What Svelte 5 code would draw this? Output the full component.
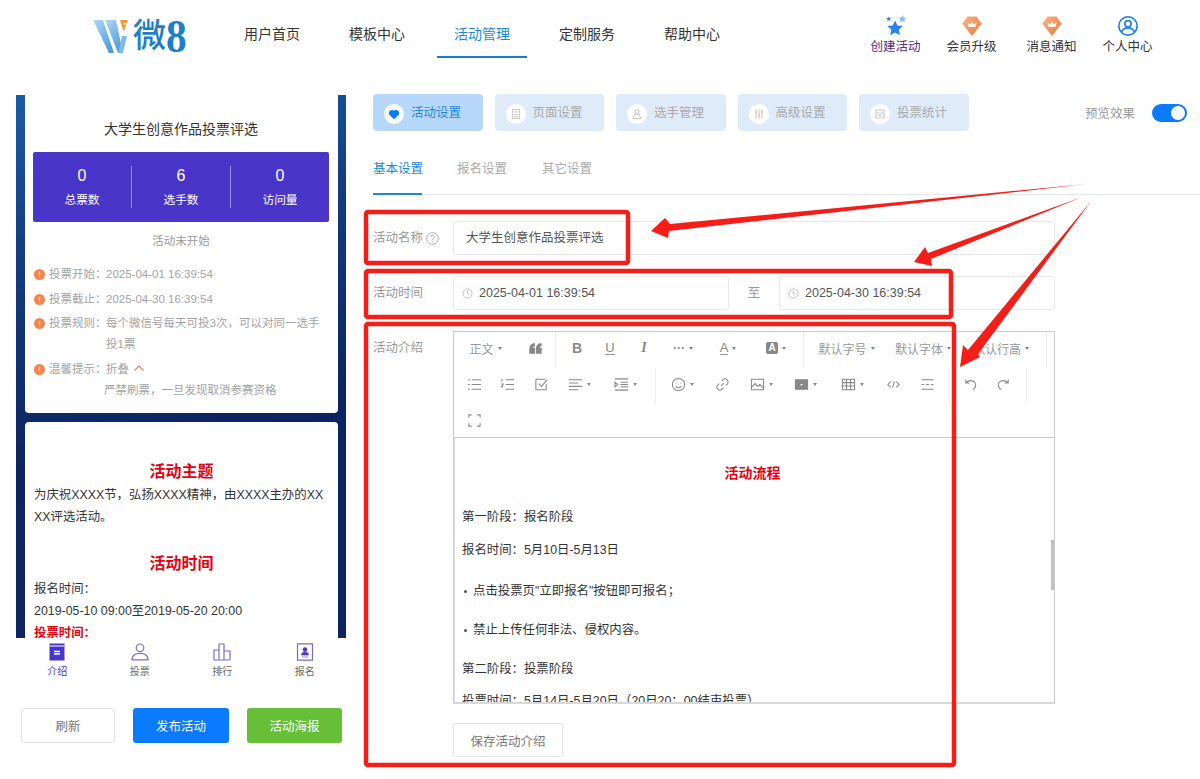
<script>
  const nav = [
    { label: '用户首页' },
    { label: '模板中心' },
    { label: '活动管理', active: true },
    { label: '定制服务' },
    { label: '帮助中心' }
  ];
  const info = [
    { k: '投票开始：', v: '2025-04-01 16:39:54' },
    { k: '投票截止：', v: '2025-04-30 16:39:54' },
    { k: '投票规则：', v: '每个微信号每天可投3次，可以对同一选手投1票' }
  ];
  const stats = [
    { n: 0, l: '总票数' },
    { n: 6, l: '选手数' },
    { n: 0, l: '访问量' }
  ];
  const tabs = [
    { label: '活动设置', active: true, d: 'M10 14.500 L6 10.600 A2.500 2.500 0 0 1 10 7.600 A2.500 2.500 0 0 1 14 10.600 Z' },
    { label: '页面设置', d: 'M6.5 5.5h7v9h-7z M8 8h4 M8 10.500h4 M8 12.500h4' },
    { label: '选手管理', d: 'M10 5.500a2 2 0 1 1 0 4a2 2 0 1 1 0-4z M6 14.500l2-4h4l2 4z' },
    { label: '高级设置', d: 'M7 5.500v9 M10 5.500v9 M13 5.500v9 M5.800 8h2.400 M8.800 11h2.400 M11.800 8h2.400' },
    { label: '投票统计', d: 'M6 6h8v8h-8z M6 9h8 M8 11.500h4' }
  ];
  const subtabs = ['基本设置', '报名设置', '其它设置'];
  const toolbar = [
    [
      { w: 63, text: '正文', caret: true },
      { w: 37, d: 'M2 13V8c0-3 2-5 5-5v2c-1.500 0-2 1-2 3h2v5z M9 13V8c0-3 2-5 5-5v2c-1.500 0-2 1-2 3h2v5z', cls: 'solid' },
      { w: 2, div: true },
      { w: 42, glyph: 'B', cls: 'bold' },
      { w: 24, glyph: 'U', cls: 'under' },
      { w: 44, glyph: 'I', cls: 'ital' },
      { w: 34, glyph: '···', cls: 'dots', caret: true },
      { w: 56, glyph: 'A', cls: 'under', caret: true },
      { w: 40, glyph: 'A', cls: 'boxed', caret: true },
      { w: 6 },
      { w: 1, div: true },
      { w: 85, text: '默认字号', caret: true },
      { w: 68, text: '默认字体', caret: true },
      { w: 88, text: '默认行高', caret: true },
      { w: 1, div: true }
    ],
    [
      { w: 40, d: 'M1 3h2 M5 3h10 M1 8h2 M5 8h10 M1 13h2 M5 13h10' },
      { w: 26, d: 'M2 2v3 M1.500 7.500h2l-2 3h2 M6 3h9 M6 8h9 M6 13h9' },
      { w: 42, d: 'M2 2.500h10 M2 2.500v11h11v-6 M5 7l3 3 6-7' },
      { w: 34, d: 'M1 3h14 M1 6.500h10 M1 10h14 M1 13.500h10', caret: true },
      { w: 58, d: 'M1 2h14 M7 5.500h8 M7 8h8 M7 10.500h8 M1 14h14 M1 5.500l3 2.500-3 2.500z', caret: true },
      { w: 1, div: true },
      { w: 52, d: 'M8 1.500a6.500 6.500 0 1 1 0 13a6.500 6.500 0 1 1 0-13z M5 10c1.500 1.800 4.500 1.800 6 0 M5.500 6v1 M10.500 6v1', caret: true },
      { w: 28, d: 'M6.500 9.500l3-3 M7 4.500l1.500-1.500a3 3 0 0 1 4.500 4.500l-1.500 1.500 M9 11.500l-1.500 1.500a3 3 0 0 1-4.500-4.500l1.500-1.500' },
      { w: 50, d: 'M1.500 2.500h13v11h-13z M1.500 11l4-4 3 3 2-2 4 4', caret: true },
      { w: 38, d: 'M1.500 3h13v10h-13z M6.500 5.500v5l4-2.500z', caret: true, cls: 'solid' },
      { w: 56, d: 'M1.500 2.500h13v11h-13z M1.500 6h13 M1.500 9.700h13 M5.800 2.500v11 M10.200 2.500v11', caret: true },
      { w: 26, d: 'M5 5l-3 3 3 3 M11 5l3 3-3 3 M9 4.500l-2 7' },
      { w: 42, d: 'M1.500 3h13 M1.500 8h3 M6.500 8h3 M11.500 8h3 M1.500 13h13' },
      { w: 1, div: true },
      { w: 40, d: 'M3 6.500c2-3 8-4 10 0c1.200 2.600-.5 5.500-2.500 7 M3 2.500v4h4' },
      { w: 26, d: 'M13 6.500c-2-3-8-4-10 0c-1.200 2.600.5 5.500 2.500 7 M13 2.500v4h-4' },
      { w: 9 },
      { w: 1, div: true }
    ],
    [{ w: 40, d: 'M2 5v-3h3 M11 2h3v3 M14 11v3h-3 M5 14h-3v-3' }]
  ];
  const bottomTabs = ['介绍', '投票', '排行', '报名'];
</script>

{#snippet reward()}
  <svg class="act-icon" viewBox="0 0 24 24" aria-hidden="true">
    <defs>
      <linearGradient id="rw" x1="0" y1="0" x2="1" y2="1">
        <stop offset="0" stop-color="#fbb184" />
        <stop offset="1" stop-color="#ee7c3d" />
      </linearGradient>
    </defs>
    <path d="M7 1.500h10l5.500 8L12 23 1.500 9.500z" fill="url(#rw)" />
    <path d="M8 13h8l1-5-3 2-2-3-2 3-3-2z" fill="#fff" opacity=".9" />
  </svg>
{/snippet}

{#snippet alert()}
  <svg class="alert" viewBox="0 0 10 10" aria-hidden="true">
    <circle cx="5" cy="5" r="5" fill="#f5854d" />
    <path d="M5 2.500v3.200 M5 7v.8" stroke="#fde6d8" stroke-width="1.100" />
  </svg>
{/snippet}

{#snippet clock()}
  <svg class="clock" viewBox="0 0 12 12" aria-hidden="true">
    <circle cx="6" cy="6" r="5" />
    <path d="M6 3v3.200l2 1" />
  </svg>
{/snippet}

<div class="page">
  <header class="top">
    <div class="logo">
      <svg class="logo-w" viewBox="0 0 36 35" aria-hidden="true">
        <defs>
          <linearGradient id="wg" x1="0" y1="0" x2="0.7" y2="1">
            <stop offset="0" stop-color="#b3d8f3" />
            <stop offset="1" stop-color="#4a9edd" />
          </linearGradient>
        </defs>
        <path d="M0 1h10l11 33h-5z" fill="url(#wg)" />
        <path d="M12 1h11l7 33h-5z" fill="url(#wg)" />
        <path d="M25 34h5l4-17h-5z" fill="#7fbbe8" />
        <path d="M27 1h8l-1 3h-3.500v1.500h3l-3 7z" fill="#f39a32" />
      </svg>
      <span class="logo-wei">微</span><span class="logo-8">8</span>
    </div>
    <nav class="nav">
      {#each nav as n}
        <a class="nav-item" class:active={n.active}>{n.label}</a>
      {/each}
    </nav>
    <div class="actions">
      <div class="act purple">
        <svg class="act-icon" viewBox="0 0 24 24" aria-hidden="true">
          <path d="M11 6l2.600 5.400 5.900.7-4.400 4 1.200 5.900-5.300-3-5.300 3 1.200-5.900-4.400-4 5.900-.7z" fill="#2b82ee" />
          <path d="M19 0l1.300 2.700 3 .3-2.200 2.100.6 3-2.700-1.500-2.700 1.500.6-3-2.200-2.100 3-.3z" fill="#8fbdf3" />
          <path d="M4 1.500l.8 1.700 1.800.2-1.300 1.300.3 1.800-1.600-.9-1.600.9.3-1.800-1.300-1.300 1.800-.2z" fill="#2b82ee" />
        </svg>
        <span>创建活动</span>
      </div>
      <div class="act">{@render reward()}<span>会员升级</span></div>
      <div class="act">{@render reward()}<span>消息通知</span></div>
      <div class="act">
        <svg class="act-icon" viewBox="0 0 24 24" fill="none" stroke="#1f82e4" stroke-width="1.800" aria-hidden="true">
          <circle cx="12" cy="12" r="10" />
          <circle cx="12" cy="9.500" r="3.400" />
          <path d="M5 18.500c1.500-3.500 4-4.500 7-4.500s5.500 1 7 4.500" />
        </svg>
        <span>个人中心</span>
      </div>
    </div>
  </header>

  <div class="main">
    <aside class="side">
      <div class="phone">
        <section class="card head-card">
          <h2 class="vote-title">大学生创意作品投票评选</h2>
          <div class="stats">
            {#each stats as s}
              <div class="stat">
                <div class="stat-n">{s.n}</div>
                <div class="stat-l">{s.l}</div>
              </div>
            {/each}
          </div>
          <div class="status">活动未开始</div>
          <div class="info">
            {#each info as i}
              <div class="info-row">
                {@render alert()}
                <span class="info-k">{i.k}</span>
                <span class="info-v">{i.v}</span>
              </div>
            {/each}
            <div class="info-row">
              {@render alert()}
              <span class="info-k">温馨提示：</span>
              <span class="info-v">折叠
                <svg class="chev" viewBox="0 0 10 6" aria-hidden="true"><path d="M.5 5.500L5 1l4.500 4.500" /></svg>
              </span>
            </div>
            <div class="info-last">严禁刷票，一旦发现取消参赛资格</div>
          </div>
        </section>
        <section class="card intro-card">
          <h3 class="intro-h">活动主题</h3>
          <p class="intro-p">为庆祝XXXX节，弘扬XXXX精神，由XXXX主办的XXXX评选活动。</p>
          <h3 class="intro-h second">活动时间</h3>
          <p class="intro-p">报名时间：</p>
          <p class="intro-p">2019-05-10 09:00至2019-05-20 20:00</p>
          <p class="intro-p red">投票时间：</p>
        </section>
      </div>
      <div class="bottom-tabs">
        {#each bottomTabs as t, i}
          <div class="bt" class:on={i === 0}>
            <svg viewBox="0 0 18 18" aria-hidden="true">
              {#if i === 0}
                <path d="M1.500 .5h15v17h-15z" fill="#4a35c9" />
                <path d="M1.500 3h15" stroke="#fff" stroke-width="1" />
                <path d="M6 8.500h6 M6 11h6" stroke="#fff" stroke-width="1.300" />
              {:else if i === 1}
                <circle cx="9" cy="4.800" r="3.800" fill="none" stroke="#7a6ad6" stroke-width="1.200" />
                <path d="M1 16.800c0-4 3-6.500 8-6.500s8 2.500 8 6.500z" fill="none" stroke="#7a6ad6" stroke-width="1.200" />
              {:else if i === 2}
                <path d="M1 17v-10h5v10 M6 17v-16h5v16 M11 17v-9h6v9 M1 17h16" fill="none" stroke="#7a6ad6" stroke-width="1.200" />
              {:else}
                <path d="M1.500 .8h15v16.400h-15z" fill="none" stroke="#7a6ad6" stroke-width="1.200" />
                <circle cx="9" cy="6.500" r="2.200" fill="#4a35c9" />
                <path d="M5.500 12c0-2 1.500-3 3.500-3s3.500 1 3.500 3z M6 14h6" fill="#4a35c9" stroke="#4a35c9" stroke-width=".6" />
              {/if}
            </svg>
            <span>{t}</span>
          </div>
        {/each}
      </div>
      <div class="side-btns">
        <button class="btn plain">刷新</button>
        <button class="btn blue">发布活动</button>
        <button class="btn green">活动海报</button>
      </div>
    </aside>

    <div class="content">
      <div class="tabs-row">
        {#each tabs as t}
          <div class="tab" class:active={t.active}>
            <span class="tab-dot">
              <svg viewBox="0 0 20 20" aria-hidden="true" class:heart={t.active}>
                <path d={t.d} />
              </svg>
            </span>
            <span class="tab-label">{t.label}</span>
          </div>
        {/each}
        <div class="preview">
          <span>预览效果</span>
          <span class="switch"><span class="knob"></span></span>
        </div>
      </div>

      <div class="subtabs">
        {#each subtabs as s, i}
          <span class="subtab" class:active={i === 0}>{s}</span>
        {/each}
      </div>

      <div class="form">
        <div class="row r1">
          <label class="lbl">活动名称
            <svg class="help" viewBox="0 0 14 14" aria-hidden="true">
              <circle cx="7" cy="7" r="6.300" />
              <path d="M5.200 5.500c0-2.400 3.800-2.400 3.800-.2 0 1.500-2 1.500-2 3.200 M7 10v1" />
            </svg>
          </label>
          <div class="input name">大学生创意作品投票评选</div>
        </div>
        <div class="row r2">
          <label class="lbl">活动时间</label>
          <div class="input date">{@render clock()}<span>2025-04-01 16:39:54</span></div>
          <span class="to">至</span>
          <div class="input date">{@render clock()}<span>2025-04-30 16:39:54</span></div>
        </div>
        <div class="row r3">
          <label class="lbl">活动介绍</label>
          <div class="editor-col">
            <div class="editor">
              <div class="toolbar">
                {#each toolbar as tr}
                  <div class="t-row">
                    {#each tr as it}
                      {#if it.div}
                        <span class="t-div"></span>
                      {:else}
                        <span class="tool" style:width="{it.w}px">
                          {#if it.text}
                            <span class="t-text">{it.text}</span>
                          {:else if it.glyph}
                            <span class="t-glyph {it.cls}">{it.glyph}</span>
                          {:else if it.d}
                            <svg class="t-ico {it.cls || ''}" viewBox="0 0 16 16" aria-hidden="true"><path d={it.d} /></svg>
                          {/if}
                          {#if it.caret}<i class="caret"></i>{/if}
                        </span>
                      {/if}
                    {/each}
                  </div>
                {/each}
              </div>
              <div class="doc">
                <div class="doc-title">活动流程</div>
                <p class="l1">第一阶段：报名阶段</p>
                <p class="l2">报名时间：5月10日-5月13日</p>
                <p class="l3 bullet">点击投票页"立即报名"按钮即可报名；</p>
                <p class="l4 bullet">禁止上传任何非法、侵权内容。</p>
                <p class="l4">第二阶段：投票阶段</p>
                <p class="l2b">投票时间：5月14日-5月20日（20日20：00结束投票）</p>
                <span class="thumb"></span>
              </div>
            </div>
            <button class="save">保存活动介绍</button>
          </div>
        </div>
      </div>
    </div>
  </div>

  <svg class="marks" viewBox="0 0 1200 779" aria-hidden="true">
    <rect x="366" y="212" width="262" height="51" rx="2" />
    <rect x="366" y="271" width="585" height="46" rx="2" />
    <rect x="366" y="324" width="588" height="441" rx="2" />
    <polygon class="arrow" points="1086,184 670,224 665,218 651,231 668,238 669,231" />
    <polygon class="arrow" points="1082,197 928,253 925,247 914,262 932,266 931,259" />
    <polygon class="arrow" points="1092,200 978,354 980,357 960,367 963,345 968,350" />
  </svg>
</div>

<style>
  :global(body) { margin: 0; background: #fff; }
  * { box-sizing: border-box; }
  .page {
    position: relative;
    width: 1200px;
    height: 779px;
    overflow: hidden;
    background: #fff;
    font-family: "Liberation Sans", "Noto Sans CJK SC", sans-serif;
    color: #333;
  }

  .top { display: flex; align-items: flex-start; height: 78px; padding-left: 93px; padding-right: 47px; }
  .logo { display: flex; align-items: center; width: 94px; height: 36px; margin-top: 18px; color: #1e7fc9; }
  .logo-w { width: 36px; height: 35px; flex: none; }
  .logo-wei { font-size: 33px; line-height: 36px; margin-left: 4px; flex: none; font-weight: 500; }
  .logo-8 { font-family: "Liberation Serif", serif; font-size: 47px; line-height: 36px; flex: none; width: 20px; transform: scaleX(.88); transform-origin: left center; font-weight: 700; }

  .nav { display: flex; gap: 15px; margin-left: 40px; }
  .nav-item { width: 90px; height: 58px; padding-top: 24px; line-height: 20px; font-size: 14px; text-align: center; color: #333; border-bottom: 2px solid transparent; }
  .nav-item.active { color: #1d87e0; border-bottom-color: #1a7ad4; }

  .actions { margin-left: auto; display: flex; gap: 25px; padding-top: 15px; }
  .act { display: flex; flex-direction: column; align-items: center; width: 51px; font-size: 12.500px; line-height: 16px; color: #333; }
  .act:nth-child(3) { margin-left: 4px; }
  .act.purple { color: #5b2a86; }
  .act-icon { width: 22px; height: 22px; margin-bottom: 2px; flex: none; }

  .main { display: flex; align-items: flex-start; }
  .side { width: 330px; margin-left: 16px; margin-top: 17px; flex: none; }
  .phone {
    height: 543px;
    padding: 0 8px 0 9px;
    overflow: hidden;
    background: linear-gradient(168deg, #1b5ca6 0%, #143d80 25%, #0c2560 60%, #0d2660 100%);
  }
  .card { background: #fff; border-radius: 4px; }
  .head-card { height: 318px; padding: 25px 9px 0 8px; border-radius: 0 0 4px 4px; }
  .vote-title { margin: 0; font-size: 14px; font-weight: 400; text-align: center; line-height: 18px; color: #333; }
  .stats { display: flex; align-items: center; height: 70px; margin-top: 14px; background: #4a35c9; border-radius: 2px; }
  .stat { flex: 1; height: 42px; color: #fff; text-align: center; border-right: 1px solid rgba(255, 255, 255, .45); }
  .stat:last-child { border-right: 0; }
  .stat-n { font-size: 16px; line-height: 20px; margin-top: 0; }
  .stat-l { font-size: 11.700px; line-height: 16px; margin-top: 6px; }
  .status { margin-top: 10px; text-align: center; font-size: 11.500px; line-height: 18px; color: #999; }
  .info { margin-top: 14px; font-size: 11.500px; color: #a3a3a3; line-height: 21px; padding-left: 1px; }
  .info-row { display: flex; align-items: flex-start; margin-bottom: 3.500px; }
  .alert { width: 11px; height: 11px; flex: none; margin-top: 5px; margin-right: 4px; }
  .info-k { flex: none; width: 57px; white-space: nowrap; }
  .info-v { flex: 1; padding-right: 4px; }
  .chev { width: 10px; height: 6px; margin-left: 2px; vertical-align: 2px; fill: none; stroke: #f3794a; stroke-width: 1.100; }
  .info-last { padding-left: 70px; margin-top: -3.500px; }

  .intro-card { height: 240px; margin-top: 9px; padding: 39px 9px 0 9px; }
  .intro-h { margin: 0 0 1px; font-size: 16px; line-height: 22px; font-weight: 700; color: #e60012; text-align: center; }
  .intro-h.second { margin: 25px 0 3px; }
  .intro-p { margin: 0; font-size: 12.400px; line-height: 22px; color: #333; word-break: break-all; }
  .intro-p.red { color: #e60012; font-weight: 700; }

  .bottom-tabs { display: flex; height: 52px; background: #fff; }
  .bt { flex: 1; display: flex; flex-direction: column; align-items: center; padding-top: 5px; font-size: 10px; line-height: 14px; color: #666; }
  .bt svg { width: 18px; height: 18px; margin-bottom: 4px; }
  .bt.on { color: #4a35c9; }

  .side-btns { display: flex; gap: 18px; margin-top: 18px; padding: 0 4px 0 5px; }
  .btn { width: 95px; height: 35px; border: 0; border-radius: 3px; font: inherit; font-size: 12.500px; color: #fff; padding: 0; }
  .btn.plain { width: 94px; background: #fff; border: 1px solid #e3e3e3; color: #777; }
  .btn.blue { width: 96px; background: #0a7aff; }
  .btn.green { background: #67bf38; }

  .content { margin-left: 27px; margin-top: 16px; width: 827px; flex: none; }
  .tabs-row { display: flex; gap: 12px; height: 37px; padding-right: 13px; }
  .tab { width: 109.500px; display: flex; align-items: center; gap: 7px; padding-left: 11px; background: #e0ebfa; border-radius: 4px; font-size: 12.500px; color: #aaa; }
  .tab.active { background: #b7d7fb; color: #1d87e0; }
  .tab-label { margin-bottom: 3px; }
  .tab-dot { width: 20px; height: 20px; border-radius: 50%; background: #fff; flex: none; margin-top: 2px; }
  .tab-dot svg { display: block; width: 20px; height: 20px; fill: none; stroke: #cfcbc6; stroke-width: 1.200; }
  .tab-dot svg.heart { fill: #0a7aff; stroke: #0a7aff; }
  .preview { margin-left: auto; display: flex; align-items: center; gap: 17px; font-size: 12.500px; color: #999; }
  .switch { position: relative; width: 35px; height: 18px; border-radius: 9px; background: #0a7aff; }
  .knob { position: absolute; top: 2px; right: 2px; width: 14px; height: 14px; border-radius: 50%; background: #fff; }

  .subtabs { display: flex; gap: 35px; height: 64px; padding-top: 28px; border-bottom: 1px solid #e4e7ed; }
  .subtab { width: 50px; height: 36px; font-size: 12.500px; line-height: 20px; color: #aaa; white-space: nowrap; margin-bottom: -1px; }
  .subtab.active { color: #1d87e0; border-bottom: 2px solid #1d87e0; width: 49px; }

  .form { padding-top: 26px; padding-right: 145px; }
  .row { display: flex; align-items: flex-start; }
  .r1 { height: 55px; }
  .r2 { height: 55px; }
  .lbl { width: 80px; flex: none; height: 34px; line-height: 34px; font-size: 12.500px; color: #999; display: flex; align-items: center; }
  .help { width: 13px; height: 13px; margin-left: 3px; fill: none; stroke: #aaa; stroke-width: 1; }
  .input { height: 34px; border: 1px solid #e6e8ec; border-radius: 3px; line-height: 32px; font-size: 12.500px; color: #555; }
  .input.name { flex: 1; padding-left: 12px; }
  .input.date { width: 276px; display: flex; align-items: center; padding-left: 8px; gap: 6px; }
  .clock { width: 11px; height: 11px; fill: none; stroke: #bbb; stroke-width: 1; }
  .to { width: 50px; text-align: center; line-height: 34px; font-size: 12.500px; color: #999; }

  .editor-col { flex: 1; min-width: 0; }
  .editor { height: 373px; border: 1px solid #ccc; border-bottom: 2px solid #d9d9d9; display: flex; flex-direction: column; }
  .toolbar { height: 106px; flex: none; border-bottom: 1px solid #ccc; color: #888; }
  .t-row { display: flex; align-items: flex-start; height: 36px; }
  .tool { display: flex; align-items: center; justify-content: center; gap: 4px; height: 32px; flex: none; }
  .t-div { width: 1px; height: 36px; background: #eee; flex: none; margin: 0 .5px; }
  .t-text { font-size: 12px; color: #999; white-space: nowrap; }
  .t-ico { width: 15px; height: 15px; fill: none; stroke: #888; stroke-width: 1.100; }
  .t-ico.solid { fill: #888; }
  .t-glyph { font-family: "Liberation Serif", serif; font-size: 14px; color: #888; line-height: 16px; }
  .t-glyph.bold { font-family: "Liberation Sans", sans-serif; font-weight: 700; }
  .t-glyph.under { font-family: "Liberation Sans", sans-serif; border-bottom: 1.500px solid #999; line-height: 13px; font-size: 13px; }
  .t-glyph.ital { font-style: italic; font-weight: 700; }
  .t-glyph.dots { font-family: "Liberation Sans", sans-serif; font-size: 12px; font-weight: 700; }
  .t-glyph.boxed { font-family: "Liberation Sans", sans-serif; font-size: 10px; font-weight: 700; line-height: 12px; color: #fff; background: #888; width: 12px; text-align: center; border-radius: 2px; }
  .caret { width: 0; height: 0; border: 2.500px solid transparent; border-top: 3px solid #888; border-bottom: 0; flex: none; }

  .doc { position: relative; flex: 1; overflow: hidden; padding-top: 25px; font-size: 12.400px; line-height: 20px; color: #333; box-shadow: inset 1px 0 #ddd; }
  .doc p { margin: 0; padding-left: 8px; }
  .doc-title { color: #e60012; font-weight: 700; font-size: 14px; text-align: center; padding-right: 3px; }
  .doc .l1 { margin-top: 24px; }
  .doc .l2 { margin-top: 13px; }
  .doc .l2b { margin-top: 12px; }
  .doc .l3 { margin-top: 21px; }
  .doc .l4 { margin-top: 19px; }
  .doc .bullet { padding-left: 19px; position: relative; }
  .bullet::before { content: ""; position: absolute; left: 10px; top: 9px; width: 3px; height: 3px; border-radius: 50%; background: #555; }
  .thumb { position: absolute; right: 0; top: 102px; width: 3px; height: 50px; background: #c1c1c1; }

  .save { display: block; margin-top: 19px; width: 110px; height: 34px; background: #fff; border: 1px solid #e3e3e3; border-radius: 3px; font: inherit; font-size: 12.500px; color: #777; padding: 0; }

  .marks { position: absolute; inset: 0; width: 1200px; height: 779px; pointer-events: none; }
  .marks rect { fill: none; stroke: #f51d17; stroke-width: 4.500; }
  .arrow { fill: #f51d17; }
</style>
